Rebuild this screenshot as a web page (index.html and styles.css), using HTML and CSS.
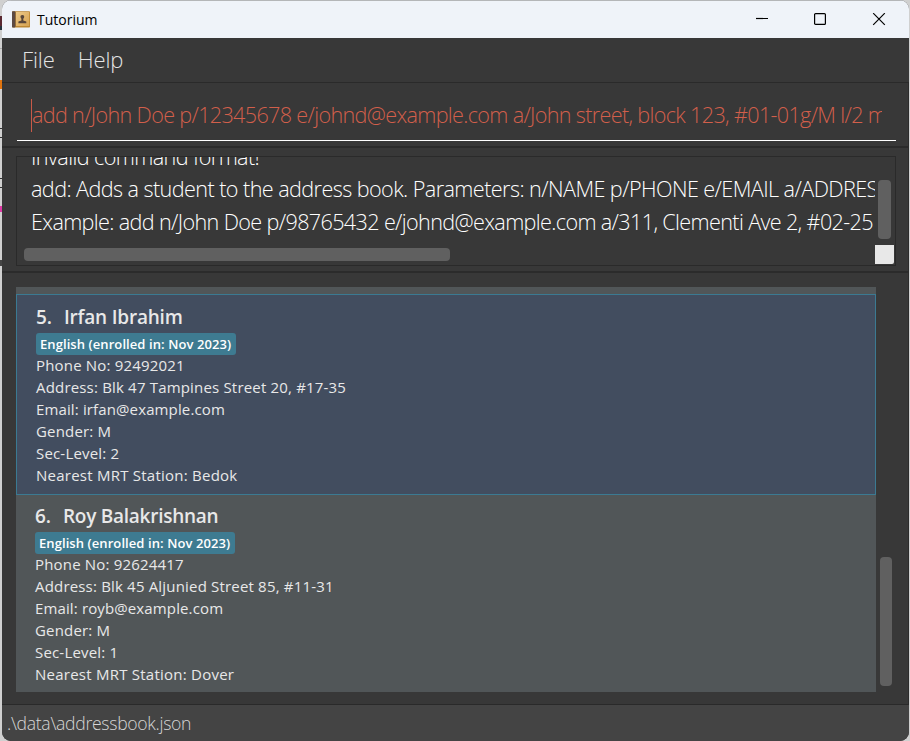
FILE: index.html
```
<!DOCTYPE html>
<html lang="en">
<head>
<meta charset="utf-8">
<title>Tutorium</title>
<link rel="stylesheet" href="styles.css">
</head>
<body>
<div class="window">
  <header class="titlebar">
    <svg class="app-icon" width="18" height="17" viewBox="0 0 18 17">
      <defs><linearGradient id="cover" x1="0" y1="0" x2="1" y2="1"><stop offset="0" stop-color="#ecc888"/><stop offset="1" stop-color="#d7a352"/></linearGradient></defs>
      <rect x="0" y="0.2" width="18" height="16.3" rx="0.8" fill="#bd8732"/>
      <rect x="4" y="1" width="13.2" height="14" fill="url(#cover)"/>
      <rect x="0" y="0.2" width="3.4" height="16.3" rx="0.8" fill="#5d4a42"/>
      <path d="M10.4 4c1.300 0 1.900.9 1.800 1.900-.1.900-.5 1.300-.9 1.900v1.800l3 .8v1.900H6.400v-1.900l3-.8V7.800c-.4-.6-.8-1-.9-1.900-.1-1 .6-1.900 1.900-1.900z" fill="#59463a"/>
    </svg>
    <span class="title">Tutorium</span>
    <div class="controls">
      <svg width="14" height="14" viewBox="0 0 14 14"><path d="M1 5.500h12" /></svg>
      <svg width="14" height="14" viewBox="0 0 14 14"><rect x="1.600" y="0.600" width="10.800" height="10.800" rx="1"/></svg>
      <svg width="14" height="14" viewBox="0 0 14 14"><path d="M1.200 0.200l11.600 11.600M12.800 0.200L1.200 11.800"/></svg>
    </div>
  </header>
  <nav class="menubar"><span>File</span><span>Help</span></nav>
  <section class="command-pane">
    <div class="command"><span class="caret"></span><span class="command-text">add n/John Doe p/12345678 e/johnd@example.com a/John street, block 123, #01-01g/M l/2 m</span></div>
  </section>
  <section class="result-pane">
    <div class="result">
      <div class="result-text">
        <p class="line-a">Invalid command format!</p>
        <p class="line-b">add: Adds a student to the address book. Parameters: n/NAME p/PHONE e/EMAIL a/ADDRESS</p>
        <p class="line-c">Example: add n/John Doe p/98765432 e/johnd@example.com a/311, Clementi Ave 2, #02-25</p>
      </div>
      <div class="v-track"><i class="v-thumb"></i></div>
      <div class="h-track"><i class="h-thumb"></i></div>
      <i class="corner"></i>
    </div>
  </section>
  <main class="list-pane">
    <div class="list">
      <article class="card selected">
        <h2><span class="num">5.</span><span class="n5">Irfan Ibrahim</span></h2>
        <span class="tag">English (enrolled in: Nov 2023)</span>
        <p>Phone No: 92492021</p>
        <p>Address: Blk 47 Tampines Street 20, #17-35</p>
        <p class="mail">Email: irfan@example.com</p>
        <p>Gender: M</p>
        <p>Sec-Level: 2</p>
        <p class="mrt">Nearest MRT Station: Bedok</p>
      </article>
      <article class="card">
        <h2><span class="num">6.</span><span class="n6">Roy Balakrishnan</span></h2>
        <span class="tag">English (enrolled in: Nov 2023)</span>
        <p>Phone No: 92624417</p>
        <p>Address: Blk 45 Aljunied Street 85, #11-31</p>
        <p class="mail">Email: royb@example.com</p>
        <p>Gender: M</p>
        <p>Sec-Level: 1</p>
        <p class="mrt">Nearest MRT Station: Dover</p>
      </article>
    </div>
    <div class="list-scroll"><i class="list-thumb"></i></div>
  </main>
  <footer class="status">.\data\addressbook.json</footer>
</div>
</body>
</html>
```
FILE: styles.css
```
* { box-sizing: border-box; }

body {
  margin: 0;
  height: 741px;
  overflow: hidden;
  padding: 0 1px 0 2px;
  font-family: "Open Sans", "Noto Sans", sans-serif;
  background:
    linear-gradient(#0000 16px, #5a2932 16px 26px, #26323e 26px 30px, #0000 30px 48px, #aaa 48px 49px, #0000 49px 80px, #e0740f 80px 89px, #0000 89px 128px, #333 128px 129px, #0000 129px 137px, #333 137px 138px, #0000 138px 178px, #333 178px 179px, #0000 179px 187px, #333 187px 188px, #0000 188px 206px, #df39a6 206px 212px, #0000 212px 260px, #444 260px 266px, #0000 266px) 0 0 / 2px 741px no-repeat,
    #d0d0d0;
}

.window {
  width: 907px;
  height: 741px;
  display: flex;
  flex-direction: column;
  overflow: hidden;
  background: #383838;
  border-radius: 9px;
  white-space: nowrap;
}

.titlebar {
  height: 38px;
  flex: none;
  display: flex;
  align-items: center;
  padding: 0 23px 0 10px;
  border-top: 1px solid #b4b6b8;
  background: #eff3f9;
  color: #000;
}
.app-icon { flex: none; }
.title { margin-left: 7px; font-size: 14px; line-height: 20px; }
.controls { margin-left: auto; display: flex; gap: 45px; }
.controls svg { fill: none; stroke: #000; stroke-width: 1.200; }
.controls svg:first-child { margin-right: -1px; }

.menubar {
  height: 45px;
  flex: none;
  display: flex;
  gap: 23px;
  padding-left: 20px;
  border-bottom: 1px solid #2a2a2a;
  font-size: 22px;
  font-weight: 300;
  line-height: 42px;
  letter-spacing: -0.100px;
  color: #e4e4e4;
}

.command-pane {
  height: 65px;
  flex: none;
  padding: 14px 13px 0 15px;
  border-right: 1px solid #2c2c2c;
  border-bottom: 2px solid #2b2b2b;
}
.command {
  height: 44px;
  width: 879px;
  display: flex;
  padding: 0 14px;
  border-bottom: 1px solid #fff;
  color: #d25f4b;
  font-size: 21.600px;
  font-weight: 300;
  line-height: 35px;
  letter-spacing: -0.670px;
}
.caret { width: 1px; height: 33px; margin-top: 2px; flex: none; background: #c85a48; }
.command-text { flex: 1; overflow: hidden; }

.result-pane {
  height: 125px;
  flex: none;
  padding: 8px 14px 0;
  border-right: 1px solid #2c2c2c;
  border-bottom: 2px solid #2b2b2b;
}
.result {
  position: relative;
  height: 110px;
  width: 880px;
  border: 1px solid #2a2a2a;
}
.result-text {
  height: 88px;
  width: 858px;
  padding-left: 14px;
  overflow: hidden;
  display: flex;
  flex-direction: column;
  justify-content: flex-end;
  color: #fff;
  font-size: 21.600px;
  font-weight: 300;
}
.result-text p { margin: 0; height: 32.500px; line-height: 32.500px; flex: none; }
.line-a { letter-spacing: -0.600px; }
.line-b { letter-spacing: -0.570px; }
.line-c { letter-spacing: -0.640px; }
.result-text .line-c { margin-bottom: 7px; }
.v-thumb, .h-thumb, .list-thumb { display: block; background: #606060; border-radius: 4px; }
.v-track { position: absolute; right: 4px; top: 23px; }
.v-thumb { width: 13px; height: 59px; }
.h-track { position: absolute; left: 7px; bottom: 4px; }
.h-thumb { width: 426px; height: 13px; }
.corner { position: absolute; right: 1px; bottom: 1px; width: 19px; height: 19px; background: #e8e8e8; border-radius: 0 0 2px; }

.list-pane {
  height: 431px;
  flex: none;
  display: flex;
  padding: 14px 0 12px 14px;
  border-right: 1px solid #2c2c2c;
}
.list { width: 860px; height: 405px; padding-top: 7px; background: #515658; }
.card {
  height: 201px;
  padding: 10px 19px 0;
  color: #e8e8e8;
  font-size: 15px;
  letter-spacing: 0.180px;
}
.card.selected { border: 1px solid #3b7a92; background: #424d5f; }
.card:not(.selected) { padding-top: 9px; }
.card h2 { display: flex; gap: 12px; margin: 0; height: 28px; font-size: 19px; line-height: 25px; font-weight: 600; letter-spacing: 0; }
.num { width: 16px; }
.n5 { letter-spacing: -0.200px; }
.n6 { letter-spacing: -0.260px; }
.tag {
  display: block;
  width: 200px;
  height: 22px;
  margin-bottom: -1px;
  padding-left: 4px;
  border-radius: 3px;
  background: #3e7b91;
  color: #fff;
  font-size: 13px;
  font-weight: 600;
  line-height: 22px;
  letter-spacing: 0.080px;
}
.card p { margin: 0; height: 22px; line-height: 22px; }
.card .mrt { letter-spacing: 0.240px; }
.card .mail { letter-spacing: 0.130px; }
.list-scroll { padding: 270px 0 0 4px; }
.list-thumb { width: 12px; height: 129px; }

.status {
  flex: 1;
  padding-left: 5px;
  border-top: 1px solid #2a2a2a;
  background: #444;
  color: #d6d6d6;
  font-size: 17.600px;
  font-weight: 300;
  line-height: 37px;
  letter-spacing: -0.300px;
}
```
